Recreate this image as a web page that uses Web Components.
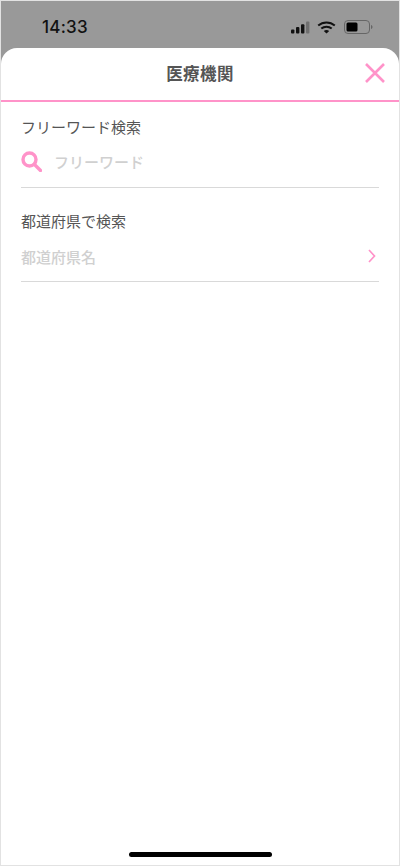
<!DOCTYPE html>
<html lang="ja">
<head>
<meta charset="utf-8">
<title>医療機関</title>
<style>
    html, body { margin: 0; height: 100%; }
    body { font-family: "Liberation Sans", "Noto Sans CJK JP", sans-serif; }
</style>
</head>
<body>
<phone-frame>
    <status-bar slot="status" time="14:33"></status-bar>
    <sheet-header title-text="医療機関"></sheet-header>
    <search-section label="フリーワード検索">
        <keyword-field placeholder="フリーワード"></keyword-field>
    </search-section>
    <search-section label="都道府県で検索">
        <prefecture-field placeholder="都道府県名"></prefecture-field>
    </search-section>
    <home-indicator slot="home"></home-indicator>
</phone-frame>

<script>
const PINK = '#ff93c9';

class PhoneFrame extends HTMLElement {
    constructor() {
        super();
        this.attachShadow({mode: 'open'}).innerHTML = `
            <style>
                :host {
                    display: flex;
                    flex-direction: column;
                    box-sizing: border-box;
                    width: 400px;
                    height: 866px;
                    border: 1px solid #e2e2e2;
                    background: #999;
                    overflow: hidden;
                }
                #sheet {
                    flex: 1;
                    display: flex;
                    flex-direction: column;
                    background: #fff;
                    border-radius: 16px 16px 0 0;
                }
                #content { flex: 1; }
            </style>
            <slot name="status"></slot>
            <div id="sheet">
                <div id="content"><slot></slot></div>
                <slot name="home"></slot>
            </div>
        `;
    }
}
customElements.define('phone-frame', PhoneFrame);

class StatusBar extends HTMLElement {
    constructor() {
        super();
        this.attachShadow({mode: 'open'}).innerHTML = `
            <style>
                :host {
                    display: flex;
                    justify-content: space-between;
                    align-items: center;
                    box-sizing: border-box;
                    height: 47px;
                    padding: 5px 26px 0 41px;
                    color: #111;
                }
                #time { font: 500 17px/20px Inter, "Liberation Sans", sans-serif; letter-spacing: .25px; }
                #icons { display: flex; align-items: center; gap: 6px; }
                svg { display: block; }
            </style>
            <span id="time"></span>
            <div id="icons">
                <svg width="20" height="13" viewBox="0 0 20 13" style="margin-left:1px">
                    <rect x="0" y="8.500" width="3.400" height="4" rx="1" fill="#111"/>
                    <rect x="5" y="6" width="3.400" height="6.500" rx="1" fill="#111"/>
                    <rect x="10" y="3.200" width="3.400" height="9.300" rx="1" fill="#111"/>
                    <rect x="15" y="0.500" width="3.400" height="12" rx="1" fill="#6f6f6f"/>
                </svg>
                <svg width="19" height="13" viewBox="0 0 19 13" fill="none" stroke="#111" stroke-width="2">
                    <path d="M1.200 4.600C6 .4 13 .4 17.800 4.600"/>
                    <path d="M4.300 7.600c3-2.600 7.400-2.600 10.400 0"/>
                    <path d="M9.500 12.600 6.800 9.900c1.600-1.300 3.800-1.300 5.400 0z" fill="#111" stroke="none"/>
                </svg>
                <svg width="29" height="14" viewBox="0 0 29 14" style="margin-left:2px">
                    <rect x="0.500" y="0.500" width="25" height="13" rx="3.500" fill="none" stroke="#666"/>
                    <rect x="2.500" y="2.500" width="11" height="9" rx="1.500" fill="#000"/>
                    <path d="M27 5v4c.9-.3 1.500-1.100 1.500-2S27.900 5.300 27 5z" fill="#666"/>
                </svg>
            </div>
        `;
        this.shadowRoot.querySelector('#time').textContent = this.getAttribute('time');
    }
}
customElements.define('status-bar', StatusBar);

class SheetHeader extends HTMLElement {
    constructor() {
        super();
        this.attachShadow({mode: 'open'}).innerHTML = `
            <style>
                :host {
                    display: flex;
                    justify-content: center;
                    align-items: center;
                    position: relative;
                    box-sizing: border-box;
                    height: 54px;
                    padding-bottom: 2px;
                    border-bottom: 2px solid ${PINK};
                }
                #title {
                    font-size: 16.500px;
                    font-weight: 700;
                    color: #555;
                    letter-spacing: .4px;
                }
                #close {
                    position: absolute;
                    right: 14px;
                    top: 15px;
                    display: block;
                }
            </style>
            <span id="title"></span>
            <svg id="close" width="20" height="20" viewBox="0 0 20 20" fill="none" stroke="${PINK}" stroke-width="2.600">
                <path d="M1 1l18 18M19 1 1 19"/>
            </svg>
        `;
        this.shadowRoot.querySelector('#title').textContent = this.getAttribute('title-text');
    }
}
customElements.define('sheet-header', SheetHeader);

class SearchSection extends HTMLElement {
    constructor() {
        super();
        this.attachShadow({mode: 'open'}).innerHTML = `
            <style>
                :host {
                    display: block;
                    margin: 0 20px 8px;
                    padding-top: 16px;
                    border-bottom: 1px solid #d9d9d9;
                }
                #label {
                    display: block;
                    font-size: 15px;
                    line-height: 20px;
                    color: #555;
                }
            </style>
            <span id="label"></span>
            <slot></slot>
        `;
        this.shadowRoot.querySelector('#label').textContent = this.getAttribute('label');
    }
}
customElements.define('search-section', SearchSection);

class KeywordField extends HTMLElement {
    constructor() {
        super();
        this.attachShadow({mode: 'open'}).innerHTML = `
            <style>
                :host {
                    display: flex;
                    align-items: center;
                    gap: 12px;
                    height: 49px;
                    box-sizing: border-box;
                    padding-bottom: 3px;
                }
                svg { display: block; }
                #placeholder { font-size: 15px; font-weight: 500; color: #d0d0d0; }
            </style>
            <svg width="21" height="21" viewBox="0 0 21 21" fill="none" stroke="${PINK}">
                <circle cx="8.500" cy="8.500" r="6.500" stroke-width="3.400"/>
                <path d="M13.500 13.500 19.500 19.500" stroke-width="3.400" stroke-linecap="round"/>
            </svg>
            <span id="placeholder"></span>
        `;
        this.shadowRoot.querySelector('#placeholder').textContent = this.getAttribute('placeholder');
    }
}
customElements.define('keyword-field', KeywordField);

class PrefectureField extends HTMLElement {
    constructor() {
        super();
        this.attachShadow({mode: 'open'}).innerHTML = `
            <style>
                :host {
                    display: flex;
                    justify-content: space-between;
                    align-items: center;
                    height: 49px;
                    box-sizing: border-box;
                    padding-bottom: 1px;
                }
                svg { display: block; margin-right: 3px; }
                #placeholder { font-size: 15px; font-weight: 500; color: #d0d0d0; }
            </style>
            <span id="placeholder"></span>
            <svg width="8" height="14" viewBox="0 0 8 14" fill="none" stroke="${PINK}" stroke-width="1.700">
                <path d="M1 1l5.500 6L1 13"/>
            </svg>
        `;
        this.shadowRoot.querySelector('#placeholder').textContent = this.getAttribute('placeholder');
    }
}
customElements.define('prefecture-field', PrefectureField);

class HomeIndicator extends HTMLElement {
    constructor() {
        super();
        this.attachShadow({mode: 'open'}).innerHTML = `
            <style>
                :host {
                    display: flex;
                    justify-content: center;
                    padding-bottom: 8px;
                }
                #bar { width: 143px; height: 5px; border-radius: 3px; background: #000; }
            </style>
            <div id="bar"></div>
        `;
    }
}
customElements.define('home-indicator', HomeIndicator);
</script>
</body>
</html>
